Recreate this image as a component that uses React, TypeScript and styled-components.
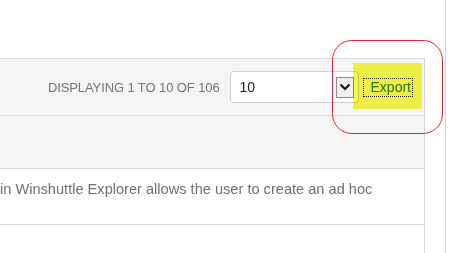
import React from "react";
import styled, { createGlobalStyle } from "styled-components";

const Global = createGlobalStyle`
  html, body { margin: 0; padding: 0; background: #ffffff; overflow: hidden; }
  body { font-family: "Liberation Sans", Arial, sans-serif; }
`;

const Page = styled.div`
  position: relative;
  width: 450px;
  height: 253px;
  display: flex;
  overflow: hidden;
`;

const Content = styled.div`
  width: 446px;
  height: 253px;
  border-right: 1px solid #d6d6d6;
  padding-top: 58px;
  box-sizing: border-box;
  overflow: hidden;
`;

const Panel = styled.div`
  width: 425px;
  border-top: 1px solid #dcdcdc;
  border-right: 1px solid #d3d3d3;
  box-sizing: border-box;
  display: flex;
  flex-direction: column;
`;

const Toolbar = styled.div`
  flex: none;
  height: 57px;
  background: #f5f5f5;
  border-bottom: 1px solid #dcdcdc;
  display: flex;
  align-items: center;
  justify-content: flex-end;
  padding-right: 11px;
  box-sizing: border-box;
`;

const Count = styled.span`
  font-size: 13px;
  color: #6f747a;
  letter-spacing: -0.1px;
  margin-right: 10px;
`;

const SelectBox = styled.div`
  width: 129px;
  height: 32px;
  box-sizing: border-box;
  border: 1px solid #cfcfcf;
  border-radius: 4px;
  background: #ffffff;
  display: flex;
  align-items: center;
  justify-content: space-between;
  padding: 0 4px 0 9px;
  font-size: 14px;
  color: #1f1f1f;
`;

const ArrowBox = styled.div`
  width: 18px;
  height: 21px;
  box-sizing: border-box;
  border: 1px solid #8a8a8a;
  background: #f0f0f0;
  display: flex;
  align-items: center;
  justify-content: center;
`;

const ExportLink = styled.a`
  margin-left: 4px;
  height: 19px;
  box-sizing: border-box;
  padding: 0 2px 0 8px;
  outline: 1px dotted #222;
  outline-offset: -1px;
  display: flex;
  align-items: center;
  font-size: 14px;
  color: #2c7a1e;
  text-decoration: none;
`;

const Row = styled.div<{ $gray?: boolean; $h: number }>`
  height: ${(p) => p.$h}px;
  flex: none;
  background: ${(p) => (p.$gray ? "#f5f5f5" : "#ffffff")};
  border-bottom: 1px solid #d9d9d9;
  box-sizing: border-box;
`;

const Cell = styled.div`
  padding-top: 11px;
  font-size: 14.6px;
  line-height: 18px;
  color: #6b7178;
  white-space: nowrap;
`;

const Highlight = styled.div`
  position: absolute;
  left: 353px;
  top: 63px;
  width: 69px;
  height: 46px;
  background: #f8f84c;
  mix-blend-mode: multiply;
  pointer-events: none;
`;

const Circle = styled.div`
  position: absolute;
  left: 332px;
  top: 40px;
  width: 111px;
  height: 94px;
  box-sizing: border-box;
  border: 1px solid #e5242c;
  border-radius: 20px;
  pointer-events: none;
`;

export default function App() {
  return (
    <>
      <Global />
      <Page>
        <Content>
          <Panel>
            <Toolbar>
              <Count>DISPLAYING 1 TO 10 OF 106</Count>
              <SelectBox>
                <span>10</span>
                <ArrowBox>
                  <svg width="12" height="8" viewBox="0 0 12 8">
                    <path d="M1.5 1.5 L6 6 L10.5 1.5" fill="none" stroke="#111" strokeWidth="2" />
                  </svg>
                </ArrowBox>
              </SelectBox>
              <ExportLink href="#">Export</ExportLink>
            </Toolbar>
            <Row $gray $h={53} />
            <Row $h={56}>
              <Cell>in Winshuttle Explorer allows the user to create an ad hoc</Cell>
            </Row>
            <Row $h={40} />
          </Panel>
        </Content>
        <Highlight />
        <Circle />
      </Page>
    </>
  );
}
